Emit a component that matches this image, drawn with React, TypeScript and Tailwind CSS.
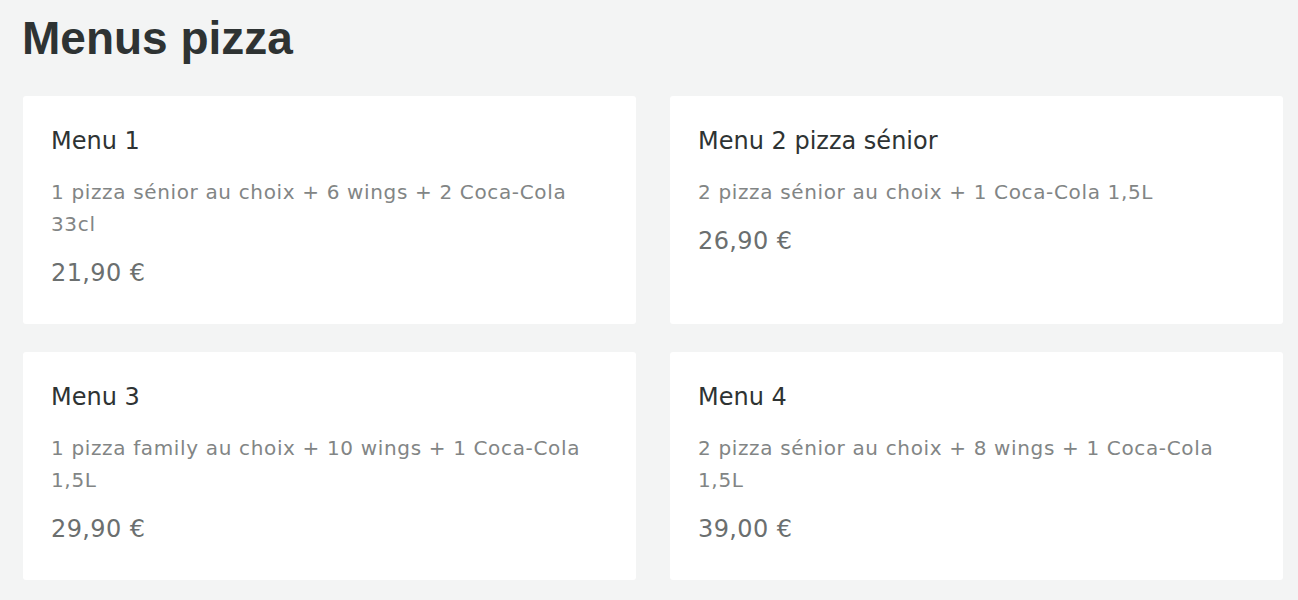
import React from 'react';

const menus = [
  { title: 'Menu 1', desc: '1 pizza sénior au choix + 6 wings + 2 Coca-Cola 33cl', price: '21,90 €' },
  { title: 'Menu 2 pizza sénior', desc: '2 pizza sénior au choix + 1 Coca-Cola 1,5L', price: '26,90 €' },
  { title: 'Menu 3', desc: '1 pizza family au choix + 10 wings + 1 Coca-Cola 1,5L', price: '29,90 €' },
  { title: 'Menu 4', desc: '2 pizza sénior au choix + 8 wings + 1 Coca-Cola 1,5L', price: '39,00 €' },
];

const App = () => {
  return (
    <div className="min-h-[600px] bg-[#f3f4f4] pl-[23px] pr-[15px] pt-[10px] pb-6">
      <h1 className="font-['Liberation_Sans',Arial,sans-serif] text-[46px] leading-[56px] font-bold text-[#2e3333] -ml-[1px]">
        Menus pizza
      </h1>
      <div className="mt-[30px] grid grid-cols-2 gap-x-[34px] gap-y-[28px] font-['DejaVu_Sans',sans-serif]">
        {menus.map((m) => (
          <div key={m.title} className="bg-white rounded-[3px] h-[228px] pl-[28px] pr-[29px] pt-[29px]">
            <h2 className="text-[24px] leading-[32px] text-[#2e3333]">{m.title}</h2>
            <p className="mt-[19px] text-[20px] leading-[32px] tracking-[0.65px] text-[#828585]">{m.desc}</p>
            <p className="mt-[17px] text-[24px] leading-[32px] tracking-[0.4px] text-[#6b6f6f]">{m.price}</p>
          </div>
        ))}
      </div>
    </div>
  );
};

export default App;
